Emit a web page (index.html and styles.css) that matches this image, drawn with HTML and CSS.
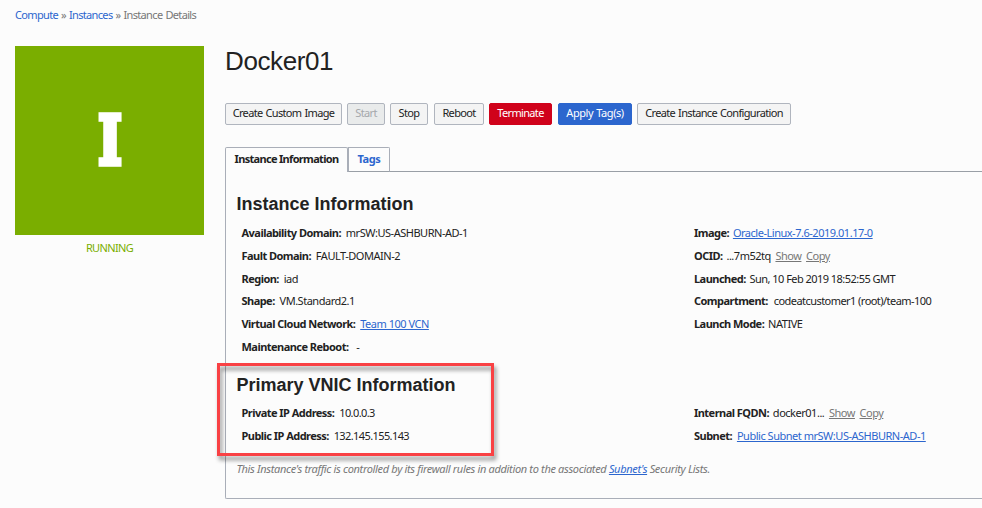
FILE: index.html
```html
<!DOCTYPE html>
<html lang="en">
<head>
<meta charset="utf-8">
<title>Instance Details</title>
<link rel="stylesheet" href="styles.css">
</head>
<body>
<nav class="breadcrumb"><a href="#">Compute</a> » <a href="#">Instances</a> » <span>Instance Details</span></nav>
<div class="layout">
  <aside class="status">
    <div class="tile"><span class="tile-letter">I</span></div>
    <div class="state">RUNNING</div>
  </aside>
  <main class="content">
    <h1>Docker01</h1>
    <div class="actions">
      <button class="btn w-image">Create Custom Image</button>
      <button class="btn w-start" disabled>Start</button>
      <button class="btn w-stop">Stop</button>
      <button class="btn w-reboot">Reboot</button>
      <button class="btn danger w-term">Terminate</button>
      <button class="btn primary w-tags">Apply Tag(s)</button>
      <button class="btn w-config">Create Instance Configuration</button>
    </div>
    <div class="tabs">
      <div class="tab active">Instance Information</div>
      <div class="tab second">Tags</div>
      <div class="tab-rule"></div>
    </div>
    <section class="panel">
      <h2>Instance Information</h2>
      <div class="columns first">
        <dl>
          <div><dt>Availability Domain:</dt><dd>mrSW:US-ASHBURN-AD-1</dd></div>
          <div><dt>Fault Domain:</dt><dd>FAULT-DOMAIN-2</dd></div>
          <div><dt>Region:</dt><dd>iad</dd></div>
          <div><dt>Shape:</dt><dd>VM.Standard2.1</dd></div>
          <div><dt>Virtual Cloud Network:</dt><dd><a href="#">Team 100 VCN</a></dd></div>
          <div><dt>Maintenance Reboot:</dt><dd class="wide">-</dd></div>
        </dl>
        <dl class="right">
          <div><dt>Image:</dt><dd><a href="#">Oracle-Linux-7.6-2019.01.17-0</a></dd></div>
          <div><dt>OCID:</dt><dd>...7m52tq</dd><dd><a class="muted" href="#">Show</a></dd><dd><a class="muted" href="#">Copy</a></dd></div>
          <div><dt>Launched:</dt><dd class="date">Sun, 10 Feb 2019 18:52:55 GMT</dd></div>
          <div><dt>Compartment:</dt><dd class="wide">codeatcustomer1 (root)/team-100</dd></div>
          <div><dt>Launch Mode:</dt><dd>NATIVE</dd></div>
        </dl>
      </div>
      <h2 class="vnic">Primary VNIC Information</h2>
      <div class="columns">
        <dl>
          <div><dt>Private IP Address:</dt><dd class="digits">10.0.0.3</dd></div>
          <div><dt>Public IP Address:</dt><dd class="digits">132.145.155.143</dd></div>
        </dl>
        <dl class="right">
          <div><dt>Internal FQDN:</dt><dd>docker01...</dd><dd><a class="muted" href="#">Show</a></dd><dd><a class="muted" href="#">Copy</a></dd></div>
          <div><dt>Subnet:</dt><dd class="subnet"><a href="#">Public Subnet mrSW:US-ASHBURN-AD-1</a></dd></div>
        </dl>
      </div>
      <p class="note">This Instance's traffic is controlled by its firewall rules in addition to the associated <a href="#">Subnet's</a> Security Lists.</p>
      <div class="highlight"></div>
    </section>
  </main>
</div>
</body>
</html>
```
FILE: styles.css
```css
* { box-sizing: border-box; }
body {
  margin: 0;
  height: 508px;
  overflow: hidden;
  background: #fcfcfc;
  color: #222;
  font: 11px/16px "Noto Sans", "Open Sans", sans-serif;
  letter-spacing: -0.48px;
  white-space: nowrap;
}
a { color: #2c66ce; }
.breadcrumb { padding: 7px 15px 0; height: 46px; color: #777; letter-spacing: -0.66px; word-spacing: 0.8px; }
.breadcrumb a { text-decoration: none; }
.layout { display: flex; gap: 21px; padding-left: 15px; }
.status { width: 189px; flex: none; text-align: center; }
.tile {
  height: 189px;
  padding-bottom: 2px;
  background: #7aae00;
  display: flex;
  align-items: center;
  justify-content: center;
}
.tile-letter {
  font: bold 68px/70px "DejaVu Serif", serif;
  color: #fff;
  letter-spacing: 0;
  -webkit-text-stroke: 5.5px #fff;
  transform: scaleX(0.74);
}
.state { color: #7aae00; padding-top: 5px; letter-spacing: -0.65px; }
.content { flex: 1; min-width: 0; }
h1 {
  margin: 0;
  height: 57px;
  font: 26px/30px "Liberation Sans", sans-serif;
  letter-spacing: -0.4px;
}
.actions { display: flex; height: 44px; }
.btn {
  height: 22px;
  margin: 0 5px 0 0;
  padding: 0 0 2px;
  border: 1px solid #b0b5be;
  border-radius: 2px;
  background: #f4f4f4;
  color: #222;
  font: inherit;
  letter-spacing: -0.66px;
  word-spacing: 0.8px;
  flex: none;
}
.btn:disabled { background: #e9ebeb; color: #a5a8ab; }
.btn.danger { background: #d0021b; border-color: #d0021b; color: #fff; }
.btn.primary { background: #2c66ce; border-color: #2c66ce; color: #fff; letter-spacing: -0.45px; }
.w-image { width: 117px; }
.w-start { width: 38px; }
.w-stop { width: 38px; margin-right: 6px; }
.w-reboot { width: 50px; }
.w-term { width: 63px; margin-right: 6px; }
.w-tags { width: 74px; }
.w-config { width: 154px; }
.tabs { display: flex; height: 25px; }
.tab {
  border: 1px solid #a9aeb8;
  border-bottom: 0;
  border-radius: 2px 2px 0 0;
  padding-top: 3px;
  font-weight: bold;
  text-align: center;
  letter-spacing: -0.68px;
}
.tab.active { width: 123px; }
.tab.second { width: 42px; color: #2c66ce; border-bottom: 1px solid #999fa6; border-radius: 0 2px 0 0; letter-spacing: -0.4px; }
.tab-rule { flex: 1; border-bottom: 1px solid #999fa6; }
.panel {
  position: relative;
  height: 327px;
  padding: 20px 0 0 10.4px;
  border-left: 1px solid #a9aeb8;
  border-bottom: 1px solid #a9aeb8;
  border-radius: 0 0 0 2px;
}
h2 {
  margin: 0;
  font: bold 18px/24px "Liberation Sans", sans-serif;
  letter-spacing: 0;
}
.columns { display: grid; grid-template-columns: 452.5px 1fr; padding: 5px 0 0 5.1px; }
.columns.first { height: 157px; padding-top: 5.6px; }
dl { margin: 0; }
dl div { display: flex; height: 22.8px; align-items: center; }
dt { font-weight: bold; margin-right: 4.8px; letter-spacing: -0.53px; }
dd { margin: 0 5px 0 0; }
dd.wide { margin-left: 3px; letter-spacing: -0.55px; }
dd.digits { letter-spacing: -0.6px; }
dd.date { letter-spacing: -0.54px; }
.right dt { margin-right: 3.9px; }
.right dd { margin-right: 4.6px; }
.right dd.wide { margin-left: 2px; }
.right dd.subnet { margin-left: 1px; }
.muted { color: #777; }
.note { margin: 13px 0 0; font-style: italic; color: #777; letter-spacing: -0.33px; }
.highlight {
  position: absolute;
  left: -9px;
  top: 191px;
  width: 277px;
  height: 93px;
  border: 3px solid #f94144;
  filter: drop-shadow(2px 4px 2px rgba(0, 0, 0, 0.45));
  pointer-events: none;
}
```
